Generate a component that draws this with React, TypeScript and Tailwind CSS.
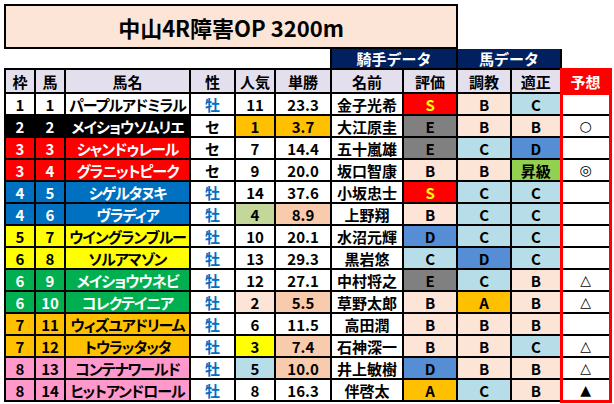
import React from 'react'

// 枠色
const FRAME: Record<number, string> = {
  1: 'bg-white text-black',
  2: 'bg-black text-white',
  3: 'bg-[#ff0000] text-white',
  4: 'bg-[#0070c0] text-white',
  5: 'bg-[#ffff00] text-black',
  6: 'bg-[#00b050] text-white',
  7: 'bg-[#ffc000] text-black',
  8: 'bg-[#ff99cc] text-black',
}

// 評価色
const GRADE: Record<string, string> = {
  S: 'bg-[#ff0000] text-[#ffff00]',
  A: 'bg-[#ffc000]',
  B: 'bg-[#fce4d6]',
  C: 'bg-[#b7dee8]',
  D: 'bg-[#558ed5]',
  E: 'bg-[#808080]',
  昇級: 'bg-[#92d050]',
}

const POP: Record<number, string> = {
  1: 'bg-[#ffc000]',
  2: 'bg-[#fce4d6]',
  3: 'bg-[#ffff00]',
  4: 'bg-[#c4d79b]',
  5: 'bg-[#b7dee8]',
}

interface Horse {
  waku: number
  color: number
  no: number
  name: string
  sex: string
  pop: number
  odds: string
  oddsBg: string
  jockey: string
  jr: string
  train: string
  fit: string
  mark: string
}

const horses: Horse[] = [
  { waku: 1, color: 1, no: 1, name: 'パープルアドミラル', sex: '牡', pop: 11, odds: '23.3', oddsBg: '', jockey: '金子光希', jr: 'S', train: 'B', fit: 'C', mark: '' },
  { waku: 2, color: 2, no: 2, name: 'メイショウソムリエ', sex: 'セ', pop: 1, odds: '3.7', oddsBg: 'bg-[#ffc000]', jockey: '大江原圭', jr: 'E', train: 'B', fit: 'B', mark: '○' },
  { waku: 3, color: 3, no: 3, name: 'シャンドゥレール', sex: 'セ', pop: 7, odds: '14.4', oddsBg: '', jockey: '五十嵐雄', jr: 'E', train: 'C', fit: 'D', mark: '' },
  { waku: 3, color: 3, no: 4, name: 'グラニットピーク', sex: 'セ', pop: 9, odds: '20.0', oddsBg: '', jockey: '坂口智康', jr: 'B', train: 'B', fit: '昇級', mark: '◎' },
  { waku: 4, color: 4, no: 5, name: 'シゲルタヌキ', sex: '牡', pop: 14, odds: '37.6', oddsBg: '', jockey: '小坂忠士', jr: 'S', train: 'C', fit: 'C', mark: '' },
  { waku: 4, color: 4, no: 6, name: 'ヴラディア', sex: '牡', pop: 4, odds: '8.9', oddsBg: 'bg-[#f8cbad]', jockey: '上野翔', jr: 'B', train: 'C', fit: 'C', mark: '' },
  { waku: 5, color: 5, no: 7, name: 'ウイングランブルー', sex: '牡', pop: 10, odds: '20.1', oddsBg: '', jockey: '水沼元輝', jr: 'D', train: 'C', fit: 'C', mark: '' },
  { waku: 6, color: 5, no: 8, name: 'ソルアマゾン', sex: '牡', pop: 13, odds: '29.3', oddsBg: '', jockey: '黒岩悠', jr: 'C', train: 'D', fit: 'C', mark: '' },
  { waku: 6, color: 6, no: 9, name: 'メイショウウネビ', sex: '牡', pop: 12, odds: '27.1', oddsBg: '', jockey: '中村将之', jr: 'E', train: 'C', fit: 'B', mark: '△' },
  { waku: 6, color: 6, no: 10, name: 'コレクテイニア', sex: '牡', pop: 2, odds: '5.5', oddsBg: 'bg-[#f8cbad]', jockey: '草野太郎', jr: 'B', train: 'A', fit: 'B', mark: '△' },
  { waku: 7, color: 7, no: 11, name: 'ウィズユアドリーム', sex: '牡', pop: 6, odds: '11.5', oddsBg: '', jockey: '高田潤', jr: 'B', train: 'B', fit: 'B', mark: '' },
  { waku: 7, color: 7, no: 12, name: 'トウラッタッタ', sex: '牡', pop: 3, odds: '7.4', oddsBg: 'bg-[#f8cbad]', jockey: '石神深一', jr: 'B', train: 'B', fit: 'C', mark: '△' },
  { waku: 8, color: 8, no: 13, name: 'コンテナワールド', sex: '牡', pop: 5, odds: '10.0', oddsBg: 'bg-[#f8cbad]', jockey: '井上敏樹', jr: 'D', train: 'B', fit: 'B', mark: '△' },
  { waku: 8, color: 8, no: 14, name: 'ヒットアンドロール', sex: '牡', pop: 8, odds: '16.3', oddsBg: '', jockey: '伴啓太', jr: 'A', train: 'C', fit: 'B', mark: '▲' },
]

const td = 'border-2 border-black p-0 text-center align-middle'

export default function App() {
  return (
    <div className="w-[614px] h-[404px] bg-white pl-[4px] pt-[4px] font-['Meiryo','Noto_Sans_CJK_JP',sans-serif] font-bold text-black">
      {/* タイトル */}
      <div className="w-[454px] h-[45px] border-2 border-black bg-[#fce4d6] flex items-center justify-center text-[22px] leading-none">
        中山4R障害OP 3200m
      </div>

      <table className="table-fixed border-collapse w-[605px] text-[15px] leading-none">
        <colgroup>
          <col className="w-[30px]" />
          <col className="w-[30px]" />
          <col className="w-[125px]" />
          <col className="w-[45px]" />
          <col className="w-[40px]" />
          <col className="w-[56px]" />
          <col className="w-[72px]" />
          <col className="w-[54px]" />
          <col className="w-[54px]" />
          <col className="w-[50px]" />
          <col className="w-[49px]" />
        </colgroup>
        <thead>
          <tr className="h-[20px]">
            <td colSpan={6} className="border-0 p-0" />
            <td colSpan={2} className={`${td} border-t-0 bg-[#002060] text-white`}>騎手データ</td>
            <td colSpan={2} className={`${td} border-t-0 bg-[#002060] text-white`}>馬データ</td>
            <td className="border-0 p-0" />
          </tr>
          <tr className="h-[24px] bg-[#e4dfec]">
            <td className={td}>枠</td>
            <td className={td}>馬</td>
            <td className={td}>馬名</td>
            <td className={td}>性</td>
            <td className={td}>人気</td>
            <td className={td}>単勝</td>
            <td className={td}>名前</td>
            <td className={td}>評価</td>
            <td className={td}>調教</td>
            <td className={td}>適正</td>
            <td className="border-[3px] border-[#ff0000] bg-[#ff0000] text-white text-center p-0">予想</td>
          </tr>
        </thead>
        <tbody>
          {horses.map((h, i) => (
            <tr key={h.no} className="h-[22px]">
              <td className={`${td} ${FRAME[h.color]}`}>{h.waku}</td>
              <td className={`${td} ${FRAME[h.color]}`}>{h.no}</td>
              <td className={`${td} ${FRAME[h.color]} [font-feature-settings:'palt'] tracking-[-1px]`}>{h.name}</td>
              <td className={`${td} ${h.sex === '牡' ? 'text-[#0070c0]' : ''}`}>{h.sex}</td>
              <td className={`${td} ${POP[h.pop] ?? ''}`}>{h.pop}</td>
              <td className={`${td} ${h.oddsBg}`}>{h.odds}</td>
              <td className={td}>{h.jockey}</td>
              <td className={`${td} ${GRADE[h.jr]}`}>{h.jr}</td>
              <td className={`${td} ${GRADE[h.train]}`}>{h.train}</td>
              <td className={`${td} ${GRADE[h.fit]}`}>{h.fit}</td>
              <td
                className={`border-2 border-black border-l-[3px] border-r-[3px] border-l-[#ff0000] border-r-[#ff0000] p-0 text-center align-middle font-normal text-[14px] font-['DejaVu_Sans',sans-serif] ${
                  i === horses.length - 1 ? 'border-b-[3px] border-b-[#ff0000]' : ''
                }`}
              >
                {h.mark}
              </td>
            </tr>
          ))}
        </tbody>
      </table>
    </div>
  )
}
